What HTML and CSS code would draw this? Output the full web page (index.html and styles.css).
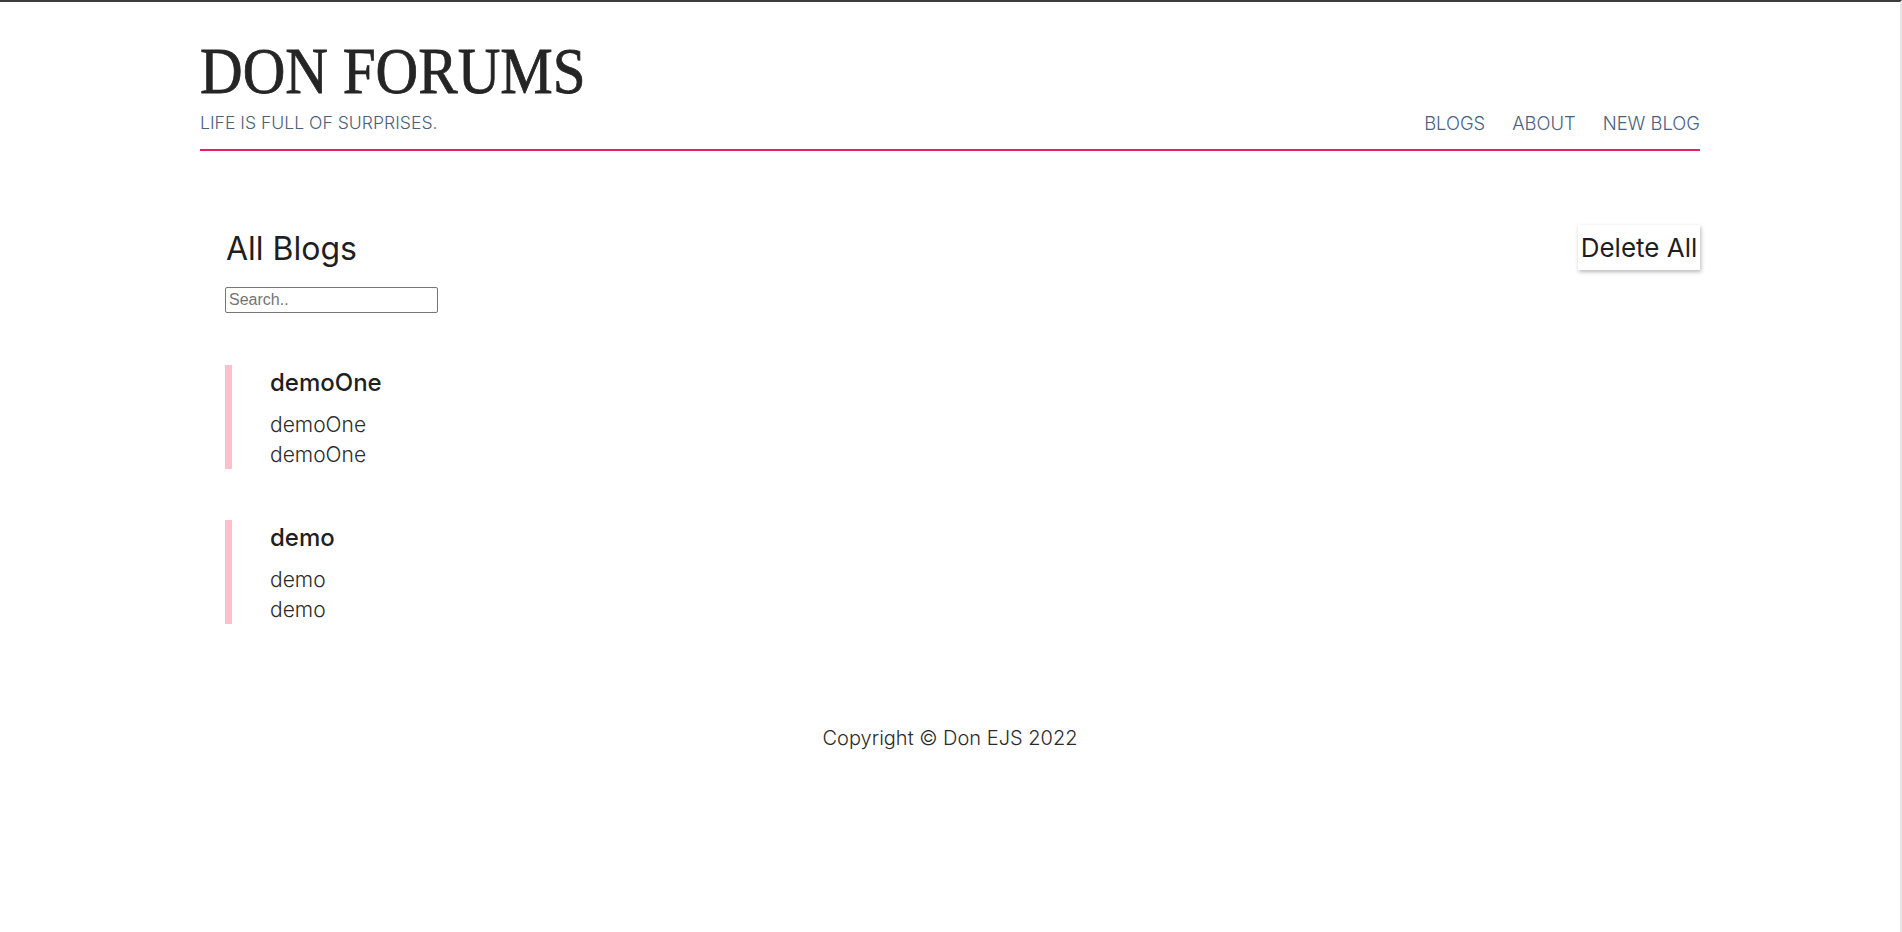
FILE: index.html
```html
<!DOCTYPE html>
<html lang="en">
<head>
<meta charset="utf-8">
<title>Don Forums</title>
<link rel="stylesheet" href="styles.css">
</head>
<body>
<header class="site-header">
  <h1 class="brand">DON FORUMS</h1>
  <div class="header-row">
    <p class="tagline">LIFE IS FULL OF SURPRISES.</p>
    <nav class="nav">
      <a href="#" class="nav-link">BLOGS</a>
      <a href="#" class="nav-link">ABOUT</a>
      <a href="#" class="nav-link">NEW BLOG</a>
    </nav>
  </div>
</header>
<main class="content">
  <div class="page-head">
    <div class="page-head-left">
      <h2 class="page-title">All Blogs</h2>
      <input class="search" type="text" placeholder="Search..">
    </div>
    <button class="delete-btn">Delete All</button>
  </div>
  <section class="blog-list">
    <article class="blog-card">
      <h3 class="blog-title">demoOne</h3>
      <p class="blog-line">demoOne</p>
      <p class="blog-line">demoOne</p>
    </article>
    <article class="blog-card">
      <h3 class="blog-title">demo</h3>
      <p class="blog-line">demo</p>
      <p class="blog-line">demo</p>
    </article>
  </section>
</main>
<footer class="site-footer">
  <p class="copyright">Copyright © Don EJS 2022</p>
</footer>
</body>
</html>
```
FILE: styles.css
```css
html {
  border-top: 2px solid #3d3d3d;
  border-right: 2px solid #e6e6e6;
  min-height: 100%;
  box-sizing: border-box;
}
body {
  margin: 0;
  font-family: Inter, "Open Sans", sans-serif;
  color: #222;
  background: #fff;
}
.site-header {
  width: 1500px;
  margin: 0 auto;
  border-bottom: 2px solid #e91e63;
  padding-bottom: 14px;
}
.brand {
  margin: 36px 0 0;
  font-family: "Liberation Serif", serif;
  font-weight: 400;
  font-size: 66px;
  line-height: 66px;
  letter-spacing: 0;
  color: #252525;
  -webkit-text-stroke: 0.8px #252525;
  transform: scaleX(0.895);
  transform-origin: left center;
  width: max-content;
}
.header-row {
  display: flex;
  justify-content: space-between;
  align-items: flex-end;
  margin-top: 7px;
}
.tagline {
  margin: 0;
  font-size: 17.6px;
  line-height: 24px;
  font-weight: 300;
  color: #4b5f7e;
}
.nav {
  display: flex;
  gap: 27px;
}
.nav-link {
  font-size: 18.4px;
  line-height: 24px;
  font-weight: 300;
  color: #4b5f7e;
  text-decoration: none;
}
.content {
  width: 1500px;
  margin: 0 auto;
  box-sizing: border-box;
  padding: 74px 0 0 25px;
}
.page-head {
  display: flex;
  justify-content: space-between;
  align-items: flex-start;
}
.page-head-left {
  display: flex;
  flex-direction: column;
  align-items: flex-start;
}
.page-title {
  margin: 4px 0 0 1px;
  font-size: 32px;
  line-height: 40px;
  font-weight: 400;
  color: #1f1f1f;
}
.search {
  margin-top: 18px;
  width: 213px;
  height: 26px;
  box-sizing: border-box;
  border: 1px solid #767676;
  border-radius: 2px;
  padding: 1px 3px;
  font-family: "Liberation Sans", Arial, sans-serif;
  font-size: 16px;
  color: #222;
}
.search::placeholder {
  color: #757575;
}
.delete-btn {
  margin-top: 0;
  width: 122px;
  height: 45px;
  border: none;
  background: #fff;
  box-shadow: 1px 2px 4px rgba(0, 0, 0, 0.28);
  font-family: Inter, "Open Sans", sans-serif;
  font-size: 26px;
  font-weight: 400;
  color: #1f1f1f;
  padding: 0;
  cursor: pointer;
}
.blog-list {
  margin-top: 52px;
  display: flex;
  flex-direction: column;
  gap: 51px;
}
.blog-card {
  border-left: 7px solid #ffc0cb;
  padding: 3px 0 0 38px;
  height: 104px;
  box-sizing: border-box;
}
.blog-title {
  margin: 0 0 12px;
  font-size: 24px;
  line-height: 30px;
  font-weight: 500;
  color: #1f1f1f;
}
.blog-line {
  margin: 0;
  font-size: 21px;
  line-height: 30px;
  font-weight: 300;
  color: #2b2b2b;
}
.site-footer {
  text-align: center;
  padding-top: 102px;
}
.copyright {
  margin: 0;
  font-size: 20px;
  line-height: 24px;
  font-weight: 300;
  color: #2b2b2b;
}
```
